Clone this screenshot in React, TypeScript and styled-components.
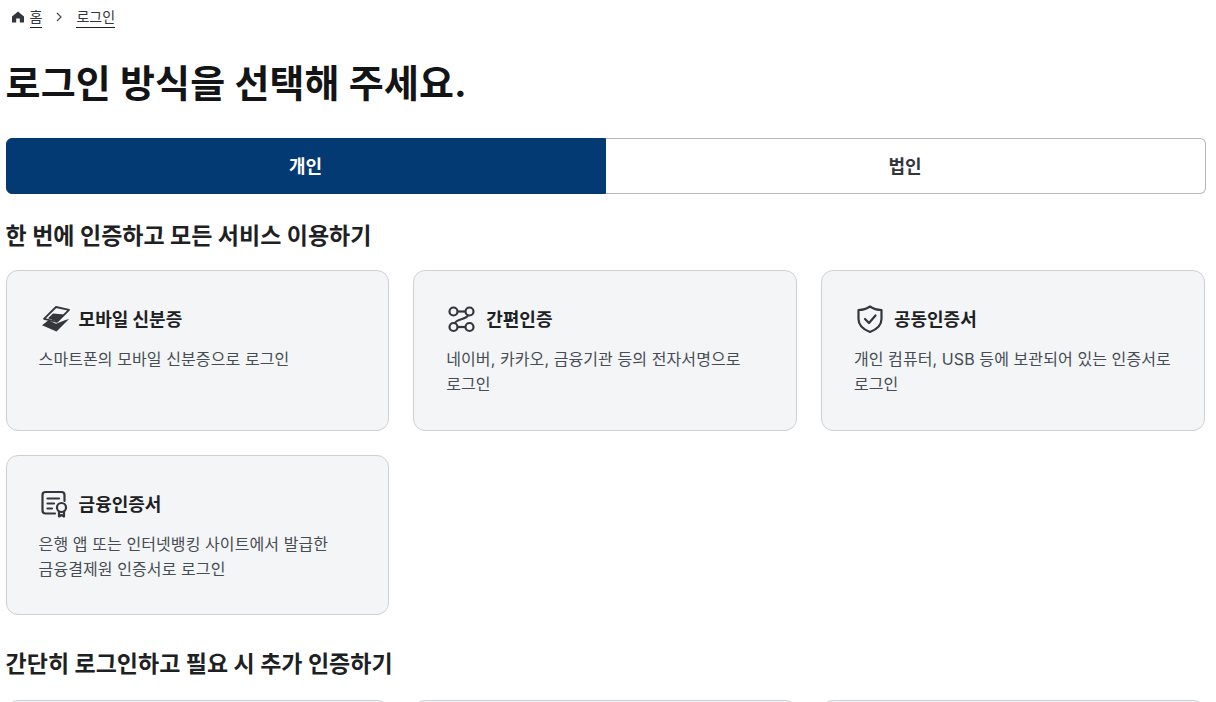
import { ReactNode } from "react";
import styled, { createGlobalStyle } from "styled-components";

const GlobalStyle = createGlobalStyle`
  html, body {
    margin: 0;
    padding: 0;
    height: 702px;
    overflow: hidden;
    background: #fff;
    font-family: Inter, "Noto Sans CJK KR", "Noto Sans", sans-serif;
    color: #1e2124;
  }
`;

type CardItem = { title: string; desc: ReactNode; icon: ReactNode };

const MobileIcon = () => (
  <svg width="32" height="32" viewBox="0 0 32 32" fill="none">
    <path d="M3 22.3 L9.5 17.2 L17 20.8 L26.5 17 L30 16 L17.5 28.5 Z" fill="#33363d" strokeLinejoin="round" />
    <path d="M5 15.8 L17 4 L30 6.8 L18 18.8 Z" fill="#f4f5f6" stroke="#33363d" strokeWidth="1.8" strokeLinejoin="round" />
    <path d="M9 15.2 L14 10.5 L25.5 11.4 L17.8 18.4 Z" fill="#33363d" />
  </svg>
);

const LinkIcon = () => (
  <svg width="32" height="32" viewBox="0 0 32 32" fill="none" stroke="#33363d" strokeWidth="2.2">
    <circle cx="7.5" cy="8.5" r="4" />
    <circle cx="23.5" cy="8.5" r="4" />
    <circle cx="7.5" cy="24" r="4" />
    <circle cx="23.5" cy="24" r="4" />
    <path d="M11.5 8.5 H19.5" />
    <path d="M11.5 24 H19.5" />
    <path d="M22 12.2 C20.5 17 10 15.5 9 20.3" />
  </svg>
);

const ShieldIcon = () => (
  <svg width="32" height="32" viewBox="0 0 32 32" fill="none" stroke="#33363d" strokeWidth="2.2" strokeLinejoin="round" strokeLinecap="round">
    <path d="M16 3.5 C19.5 6 23 7 27.5 7 V16 C27.5 22.5 22.5 26.5 16 29 C9.5 26.5 4.5 22.5 4.5 16 V7 C9 7 12.5 6 16 3.5 Z" />
    <path d="M11 16 L15 20 L21.5 12.5" />
  </svg>
);

const CertIcon = () => (
  <svg width="32" height="32" viewBox="0 0 32 32" fill="none" stroke="#33363d" strokeWidth="2.2" strokeLinecap="round" strokeLinejoin="round">
    <path d="M16 25.5 H6.5 C4.8 25.5 3.5 24.2 3.5 22.5 V7 C3.5 5.3 4.8 4 6.5 4 H22.5 C24.2 4 25.5 5.3 25.5 7 V13" />
    <path d="M8.5 10.5 H20" />
    <path d="M8.5 15.5 H15" />
    <path d="M8.5 20.5 H13" />
    <circle cx="22.5" cy="19.5" r="4.5" />
    <path d="M20 23.5 V28.5 L22.5 27 L25 28.5 V23.5" />
  </svg>
);

const firstItems: CardItem[] = [
  { title: "모바일 신분증", desc: "스마트폰의 모바일 신분증으로 로그인", icon: <MobileIcon /> },
  { title: "간편인증", desc: "네이버, 카카오, 금융기관 등의 전자서명으로 로그인", icon: <LinkIcon /> },
  { title: "공동인증서", desc: "개인 컴퓨터, USB 등에 보관되어 있는 인증서로 로그인", icon: <ShieldIcon /> },
  { title: "금융인증서", desc: "은행 앱 또는 인터넷뱅킹 사이트에서 발급한 금융결제원 인증서로 로그인", icon: <CertIcon /> },
];

const App = () => {
  return (
    <Page>
      <GlobalStyle />
      <Breadcrumb>
        <svg width="14" height="14" viewBox="0 0 14 14">
          <path d="M7 1.5 L13 6.6 V12.5 H8.8 V8.6 H5.2 V12.5 H1 V6.6 Z" fill="#33363d" />
        </svg>
        <CrumbLink>홈</CrumbLink>
        <svg width="12" height="12" viewBox="0 0 12 12" fill="none" stroke="#464c53" strokeWidth="1.2">
          <path d="M4 2 L8 6 L4 10" />
        </svg>
        <CrumbLink>로그인</CrumbLink>
      </Breadcrumb>
      <Title>로그인 방식을 선택해 주세요.</Title>
      <Tabs>
        <Tab $active>개인</Tab>
        <Tab>법인</Tab>
      </Tabs>
      <SectionTitle>한 번에 인증하고 모든 서비스 이용하기</SectionTitle>
      <CardGrid>
        {firstItems.map((item) => (
          <Card key={item.title}>
            <CardHead>
              {item.icon}
              <CardTitle>{item.title}</CardTitle>
            </CardHead>
            <CardDesc>{item.desc}</CardDesc>
          </Card>
        ))}
      </CardGrid>
      <SecondTitle>간단히 로그인하고 필요 시 추가 인증하기</SecondTitle>
      <CardGrid>
        <Card />
        <Card />
        <Card />
      </CardGrid>
    </Page>
  );
};

export default App;

const Page = styled.div`
  width: 1200px;
  margin-left: 5.6px;
`;

const Breadcrumb = styled.nav`
  display: flex;
  align-items: center;
  height: 34px;
  padding-left: 5px;
  gap: 5px;

  svg:nth-of-type(2) {
    margin: 0 6px 0 6px;
  }
`;

const CrumbLink = styled.a`
  font-size: 14px;
  line-height: 20px;
  color: #33363d;
  border-bottom: 1px solid #1e2124;
`;

const Title = styled.h1`
  margin: 22px 0 0;
  font-size: 38px;
  line-height: 54px;
  font-weight: 700;
  letter-spacing: 0.13px;
  color: #131416;
`;

const Tabs = styled.div`
  display: flex;
  margin-top: 28px;
  height: 56px;
`;

const Tab = styled.div<{ $active?: boolean }>`
  flex: none;
  width: 50%;
  display: flex;
  align-items: center;
  justify-content: center;
  box-sizing: border-box;
  font-size: 18px;
  font-weight: 700;
  padding-bottom: 3px;
  background: ${(p) => (p.$active ? "#033a74" : "#fff")};
  color: ${(p) => (p.$active ? "#fff" : "#33363d")};
  border: 1px solid ${(p) => (p.$active ? "#033a74" : "#b1b8be")};
  border-left-width: ${(p) => (p.$active ? "1px" : "0")};
  border-radius: ${(p) => (p.$active ? "6px 0 0 6px" : "0 6px 6px 0")};
`;

const SectionTitle = styled.h2`
  margin: 26px 0 17px;
  font-size: 23px;
  line-height: 33px;
  font-weight: 700;
  color: #1e2124;
`;

const SecondTitle = styled(SectionTitle)`
  margin: 33px 0 19px;
`;

const CardGrid = styled.div`
  display: grid;
  grid-template-columns: repeat(3, 383.67px);
  column-gap: 24px;
  row-gap: 24px;
`;

const Card = styled.div`
  box-sizing: border-box;
  height: 160.5px;
  padding: 32px;
  background: #f4f5f6;
  border: 1px solid #cdd1d5;
  border-radius: 12px;
`;

const CardHead = styled.div`
  display: flex;
  align-items: center;
  gap: 8px;
  height: 32px;
`;

const CardTitle = styled.div`
  font-size: 18px;
  font-weight: 700;
  padding-bottom: 2px;
  color: #1e2124;
`;

const CardDesc = styled.p`
  margin: 12px 0 0;
  font-size: 16px;
  line-height: 25px;
  letter-spacing: 0.09px;
  color: #464c53;
  word-break: keep-all;
`;
